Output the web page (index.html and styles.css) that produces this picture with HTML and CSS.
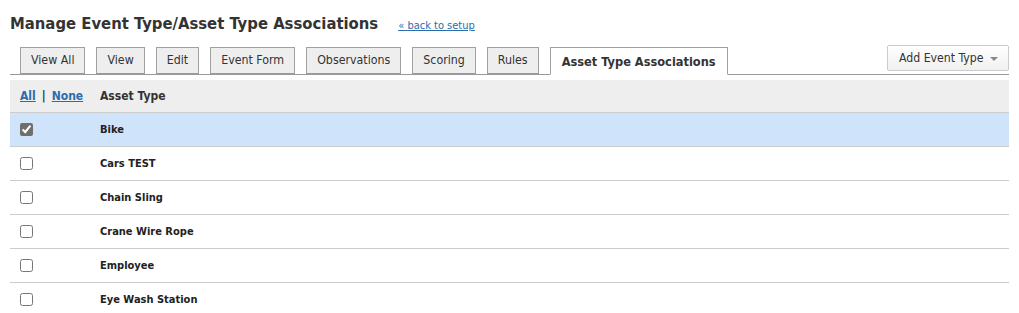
FILE: index.html
```html
<!DOCTYPE html>
<html lang="en">
<head>
    <meta charset="UTF-8">
    <title>Manage Event Type/Asset Type Associations</title>
    <link rel="stylesheet" href="styles.css">
</head>
<body>
    <div class="page-title">
        <h1>Manage Event Type/Asset Type Associations</h1>
        <a href="#" class="back-link">&laquo; back to setup</a>
    </div>

    <div class="tab-bar">
        <ul class="tabs">
            <li><a href="#">View All</a></li>
            <li><a href="#">View</a></li>
            <li><a href="#">Edit</a></li>
            <li><a href="#">Event Form</a></li>
            <li><a href="#">Observations</a></li>
            <li><a href="#">Scoring</a></li>
            <li><a href="#">Rules</a></li>
            <li class="active"><a href="#">Asset Type Associations</a></li>
        </ul>
        <button class="add-btn">Add Event Type <span class="caret"></span></button>
    </div>

    <table class="assoc-table">
        <thead>
            <tr>
                <th class="col-check"><a href="#">All</a><span class="sep">|</span><a href="#">None</a></th>
                <th>Asset Type</th>
            </tr>
        </thead>
        <tbody>
            <tr class="selected">
                <td class="col-check"><input type="checkbox" checked></td>
                <td>Bike</td>
            </tr>
            <tr>
                <td class="col-check"><input type="checkbox"></td>
                <td>Cars TEST</td>
            </tr>
            <tr>
                <td class="col-check"><input type="checkbox"></td>
                <td>Chain Sling</td>
            </tr>
            <tr>
                <td class="col-check"><input type="checkbox"></td>
                <td>Crane Wire Rope</td>
            </tr>
            <tr>
                <td class="col-check"><input type="checkbox"></td>
                <td>Employee</td>
            </tr>
            <tr>
                <td class="col-check"><input type="checkbox"></td>
                <td>Eye Wash Station</td>
            </tr>
        </tbody>
    </table>
</body>
</html>
```

FILE: styles.css
```css
body {
    margin: 0;
    padding: 0 10px;
    font-family: 'DejaVu Sans Condensed', Tahoma, sans-serif;
    font-size: 12px;
    color: #333;
    background: #fff;
}

a {
    color: #2b6cad;
}

.page-title {
    display: flex;
    align-items: baseline;
    padding-top: 14px;
    height: 33px;
    box-sizing: border-box;
}

.page-title h1 {
    margin: 0;
    font-size: 16.5px;
    font-weight: bold;
    color: #333;
}

.back-link {
    margin-left: 20px;
    font-size: 11px;
}

.tab-bar {
    display: flex;
    align-items: flex-end;
    justify-content: space-between;
    border-bottom: 1px solid #999;
    margin-top: 13px;
    height: 28px;
}

.tabs {
    list-style: none;
    margin: 0 0 -1px 10px;
    padding: 0;
    display: flex;
    gap: 11px;
}

.tabs li a {
    display: block;
    height: 25px;
    line-height: 25px;
    padding: 0 10px;
    font-size: 12.3px;
    background: #eee;
    border: 1px solid #a0a0a0;
    border-bottom-color: #999;
    color: #333;
    text-decoration: none;
}

.tabs li.active a {
    background: #fff;
    border-bottom-color: #fff;
    font-weight: bold;
    font-size: 12.7px;
    padding: 0 11px;
    height: 26px;
    line-height: 28px;
}

.add-btn {
    align-self: flex-start;
    height: 26px;
    margin-top: -1px;
    padding: 0 10px 0 11px;
    font-family: inherit;
    font-size: 12.2px;
    color: #333;
    background: linear-gradient(#fff, #f0f0f0);
    border: 1px solid #ccc;
    border-radius: 2px;
}

.caret {
    display: inline-block;
    margin-left: 3px;
    vertical-align: middle;
    border-left: 4px solid transparent;
    border-right: 4px solid transparent;
    border-top: 4px solid #888;
}

.assoc-table {
    width: 100%;
    border-collapse: collapse;
    margin-top: 5px;
}

.assoc-table th,
.assoc-table td {
    text-align: left;
    padding: 0;
    font-weight: bold;
    border-bottom: 1px solid #ccc;
}

.assoc-table th {
    background: #eee;
    height: 32px;
    color: #333;
}

.assoc-table th .sep {
    margin: 0 6px;
}

.assoc-table td {
    height: 33px;
    font-size: 11px;
    color: #222;
}

.assoc-table .col-check {
    width: 80px;
    padding-left: 10px;
}

.assoc-table tr.selected td {
    background: #cfe3fb;
}

.assoc-table input[type="checkbox"] {
    margin: 0;
    width: 13px;
    height: 13px;
    vertical-align: middle;
    accent-color: #6e6e6e;
}
```
